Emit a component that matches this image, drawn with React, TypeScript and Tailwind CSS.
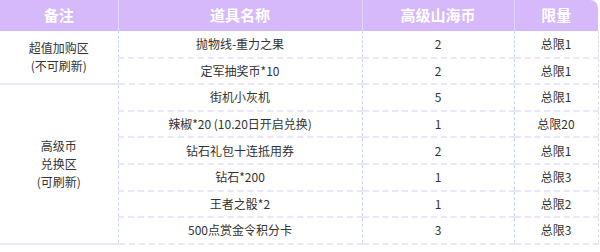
const font = '"Microsoft YaHei", "Noto Sans CJK SC", "Noto Sans", sans-serif';

type Row = { name: string; cost: string; limit: string };

const groups: { note: string[]; rows: Row[] }[] = [
  {
    note: ["超值加购区", "(不可刷新)"],
    rows: [
      { name: "抛物线-重力之果", cost: "2", limit: "总限1" },
      { name: "定军抽奖币*10", cost: "2", limit: "总限1" },
    ],
  },
  {
    note: ["高级币", "兑换区", "(可刷新)"],
    rows: [
      { name: "街机小灰机", cost: "5", limit: "总限1" },
      { name: "辣椒*20 (10.20日开启兑换)", cost: "1", limit: "总限20" },
      { name: "钻石礼包十连抵用券", cost: "2", limit: "总限1" },
      { name: "钻石*200", cost: "1", limit: "总限3" },
      { name: "王者之骰*2", cost: "1", limit: "总限2" },
      { name: "500点赏金令积分卡", cost: "3", limit: "总限3" },
    ],
  },
];

const cell = "border-b-2 border-[#ebe6fb] text-center align-middle";
const vline = "border-l border-dashed border-l-[#c9d6f6]";

export default function App() {
  return (
    <div className="w-[600px] h-[252px] bg-white" style={{ fontFamily: font }}>
      <table className="w-[598px] border-collapse table-fixed text-[12px] text-[#333]">
        <colgroup>
          <col className="w-[118px]" />
          <col className="w-[244px]" />
          <col className="w-[152px]" />
          <col className="w-[84px]" />
        </colgroup>
        <thead>
          <tr className="h-[31px] bg-[#d6b9fb] text-white text-[15px] font-bold">
            <th className="text-center">备注</th>
            <th className="text-center border-l border-[#e4d6fd]">道具名称</th>
            <th className="text-center border-l border-[#e4d6fd]">高级山海币</th>
            <th className="text-center border-l border-[#e4d6fd] rounded-tr-lg">限量</th>
          </tr>
        </thead>
        <tbody>
          {groups.map((g) =>
            g.rows.map((r, i) => (
              <tr key={r.name} className="h-[26.6px]">
                {i === 0 && (
                  <td rowSpan={g.rows.length} className={`${cell} leading-[18px]`}>
                    {g.note.map((n) => (
                      <div key={n}>{n}</div>
                    ))}
                  </td>
                )}
                <td className={`${cell} ${vline}`}>{r.name}</td>
                <td className={`${cell} ${vline}`}>{r.cost}</td>
                <td className={`${cell} ${vline} border-r border-r-[#dedde4]`}>{r.limit}</td>
              </tr>
            ))
          )}
        </tbody>
      </table>
    </div>
  );
}
